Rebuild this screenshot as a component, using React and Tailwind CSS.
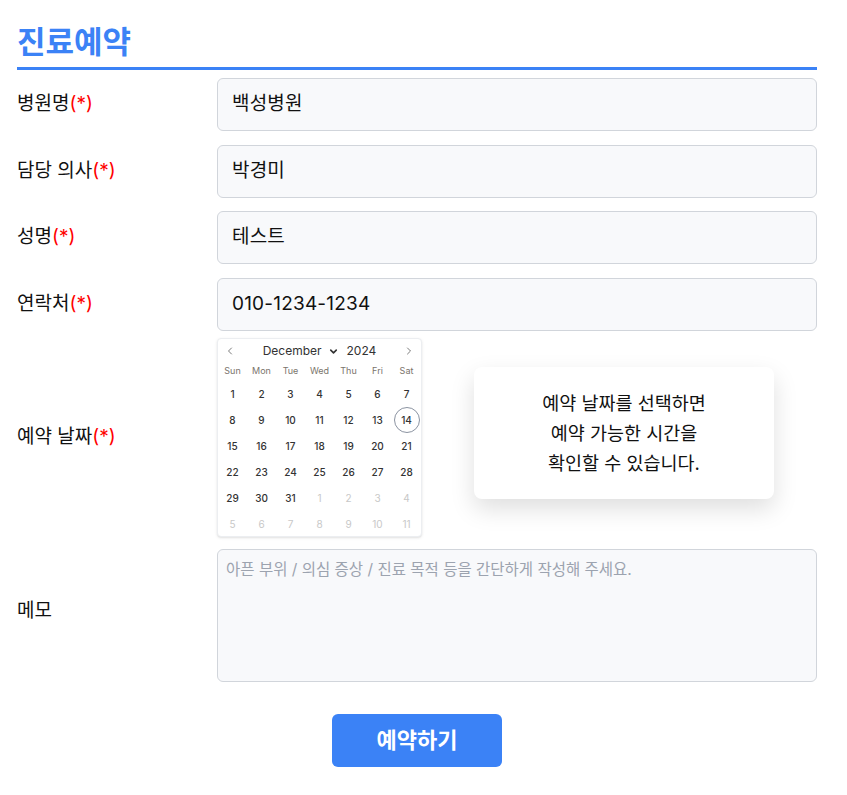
import {ChevronLeft, ChevronRight, ChevronDown} from "lucide-react";

const weeks = [
  [[1], [2], [3], [4], [5], [6], [7]],
  [[8], [9], [10], [11], [12], [13], [14]],
  [[15], [16], [17], [18], [19], [20], [21]],
  [[22], [23], [24], [25], [26], [27], [28]],
  [[29], [30], [31], [1, true], [2, true], [3, true], [4, true]],
  [[5, true], [6, true], [7, true], [8, true], [9, true], [10, true], [11, true]],
];

function Label({text, required, className = ""}) {
  return (
    <div className={"w-[200px] shrink-0 text-[19px] text-[#111] " + className}>
      {text}
      {required && <span className="text-[#ff0000]">(*)</span>}
    </div>
  );
}

function Field({label, value, className}) {
  return (
    <div className={"flex items-center " + className}>
      <Label text={label} required />
      <div className="flex h-[53px] w-[600px] items-center rounded-md border border-[#d1d5db] bg-[#f8f9fb] px-[14px] text-[19px] tracking-[0.2px] text-[#111]">
        {value}
      </div>
    </div>
  );
}

function Calendar() {
  return (
    <div className="w-[205px] h-[199px] shrink-0 rounded border border-[#eceef1] bg-white shadow-sm">
      <div className="mt-[2px] flex h-[20px] items-center justify-between px-[6px] text-[#333]">
        <ChevronLeft size={12} strokeWidth={1.3} />
        <div className="flex items-center gap-[8px] text-[12px]">
          <span className="flex items-center gap-[6px]">
            December
            <ChevronDown size={11} strokeWidth={3.5} />
          </span>
          <span>2024</span>
        </div>
        <ChevronRight size={12} strokeWidth={1.3} />
      </div>
      <div className="mt-[2px] grid h-[16px] grid-cols-7 items-center text-center text-[9px] text-[#7a746c]">
        {["Sun", "Mon", "Tue", "Wed", "Thu", "Fri", "Sat"].map(d => (
          <div key={d}>{d}</div>
        ))}
      </div>
      <div className="mt-[2px] grid grid-cols-7 text-center text-[10px] font-medium">
        {weeks.flat().map(([n, muted], i) => (
          <div key={i} className="flex h-[26px] items-center justify-center">
            {n === 14 && !muted ? (
              <span className="flex h-[26px] w-[26px] items-center justify-center rounded-full border border-[#8b93a1] text-[#333]">
                {n}
              </span>
            ) : (
              <span className={muted ? "text-[#c8c8c8] font-normal" : "text-[#333]"}>{n}</span>
            )}
          </div>
        ))}
      </div>
    </div>
  );
}

export default function App() {
  return (
    <div className="min-h-screen bg-white font-['Inter','Noto_Sans_CJK_KR',sans-serif]">
      <div className="ml-[17px] w-[800px] pt-5 pb-7">
        <h1 className="border-b-[3px] border-[#3b82f6] pb-[3px] text-[31px] leading-[44px] font-bold text-[#3b82f6]">
          진료예약
        </h1>

        <Field className="mt-2" label="병원명" value="백성병원" />
        <Field className="mt-[14px]" label="담당 의사" value="박경미" />
        <Field className="mt-[13px]" label="성명" value="테스트" />
        <Field className="mt-[14px]" label="연락처" value="010-1234-1234" />

        <div className="mt-[7px] flex items-center">
          <Label text="예약 날짜" required />
          <Calendar />
          <div className="ml-[52px] mb-[10px] flex h-[132px] w-[300px] flex-col items-center justify-center rounded-lg bg-white text-center text-[18.5px] leading-[30px] text-[#111] shadow-[0_10px_25px_rgba(0,0,0,0.13)]">
            <div>예약 날짜를 선택하면</div>
            <div>예약 가능한 시간을</div>
            <div>확인할 수 있습니다.</div>
          </div>
        </div>

        <div className="mt-3 flex items-center">
          <Label text="메모" className="pb-2" />
          <textarea
            className="h-[133px] w-[600px] resize-none rounded-md border border-[#d1d5db] bg-[#f8f9fb] px-2 py-2 text-[15.5px] text-[#111] outline-none placeholder:text-[#9ca3af]"
            placeholder="아픈 부위 / 의심 증상 / 진료 목적 등을 간단하게 작성해 주세요."
          />
        </div>

        <div className="mt-8 flex justify-center">
          <button className="h-[53px] w-[170px] rounded-md bg-[#3b82f6] text-[22px] font-bold text-white">
            예약하기
          </button>
        </div>
      </div>
    </div>
  );
}
